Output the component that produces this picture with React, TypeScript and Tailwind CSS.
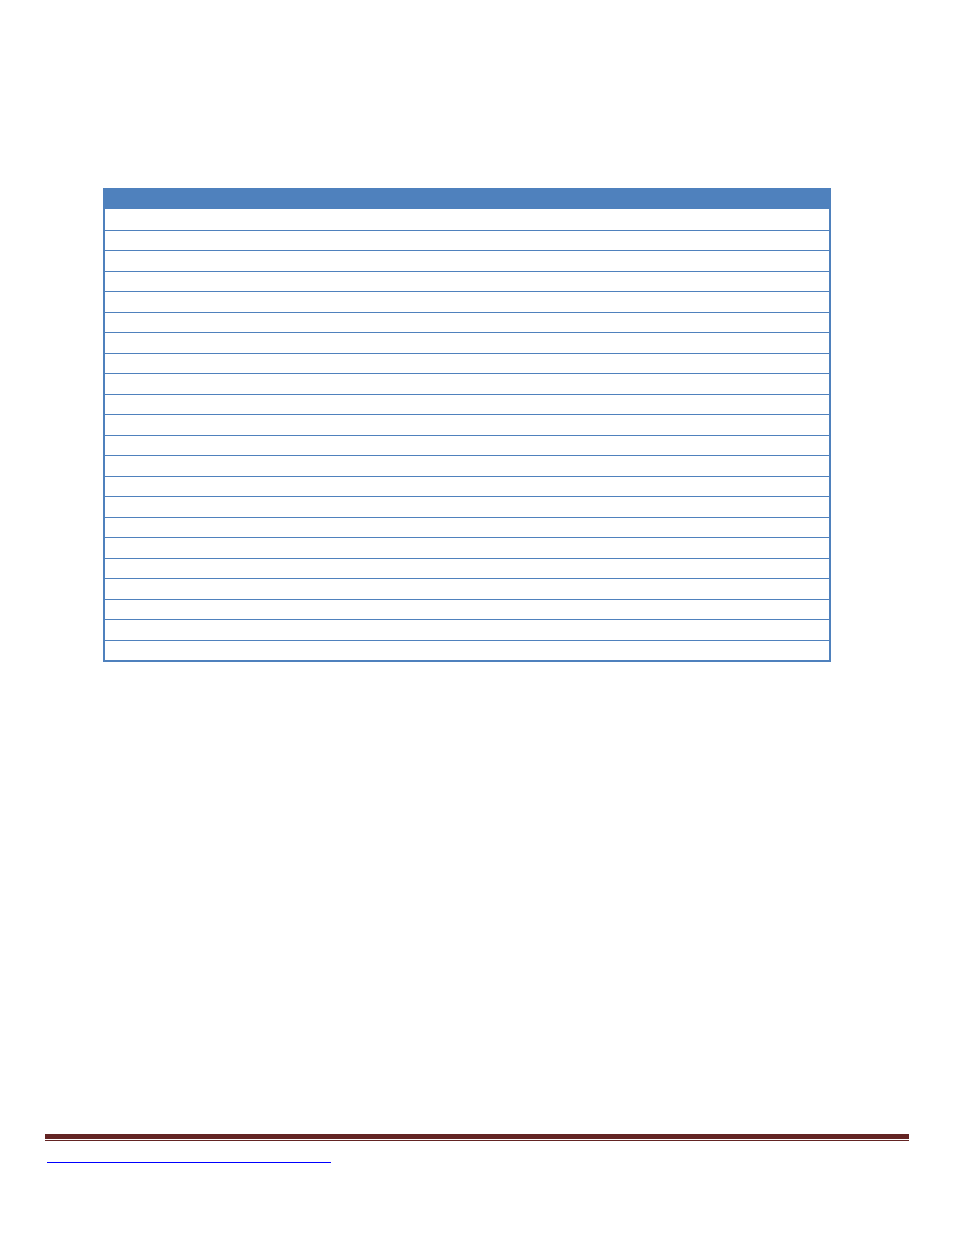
import React from "react";

const rowCount = 22;

export default function App() {
  const rows = Array.from({ length: rowCount }, (_, i) => i);

  return (
    <div
      className="w-[954px] h-[1235px] bg-white flex flex-col"
      style={{ fontFamily: '"Liberation Sans", Arial, sans-serif' }}
    >
      {/* Table */}
      <div className="mt-[188px] ml-[103px] w-[728px] border-x-2 border-b-2 border-[#4f81bd]">
        <div className="h-[21px] bg-[#4f81bd]" />
        {rows.map((i) => (
          <div
            key={i}
            className={`h-[20.5px] ${i === 0 ? "" : "border-t border-[#4f81bd]"}`}
          />
        ))}
      </div>

      {/* Footer rule */}
      <div className="mt-[472px] ml-[45px] w-[864px]">
        <div className="h-[4.7px] bg-[#632423]" />
        <div className="mt-[1px] h-[1px] bg-[#632423]" />
      </div>

      {/* Link */}
      <div className="mt-[21px] ml-[47px]">
        <a href="#" className="block w-[284px] h-[1px] bg-[#0000ff]" aria-label="link" />
      </div>
    </div>
  );
}
